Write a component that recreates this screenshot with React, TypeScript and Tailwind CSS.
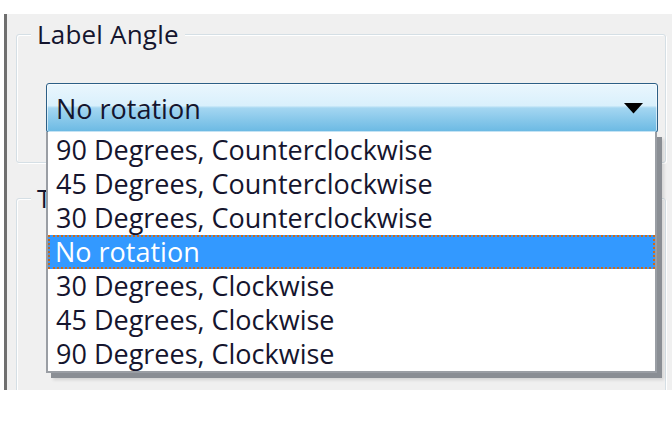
import React from "react";

const items = [
  "90 Degrees, Counterclockwise",
  "45 Degrees, Counterclockwise",
  "30 Degrees, Counterclockwise",
  "No rotation",
  "30 Degrees, Clockwise",
  "45 Degrees, Clockwise",
  "90 Degrees, Clockwise",
];

export default function App() {
  return (
    <div
      className="w-[672px] h-[423px] bg-white overflow-hidden"
      style={{ fontFamily: '"Open Sans", "Noto Sans", sans-serif' }}
    >
      <div className="relative ml-[4px] mt-[14px] h-[376px] overflow-hidden border-l-[3px] border-[#6f6f6f] bg-[#f0f0f0] pl-[9px] pr-[6px] pt-[20px] text-[27px] text-[#15152e]">
        {/* Group box 1 */}
        <div className="relative h-[129px] border border-[#d5dfe5] shadow-[inset_1px_1px_0_#ffffff,1px_1px_0_#ffffff] rounded-[3px]">
          <div className="absolute left-[14px] top-[-21px] bg-[#f0f0f0] px-[6px] leading-[40px] text-[26px] tracking-[0.2px]">
            Label Angle
          </div>
          {/* Combo box */}
          <div className="ml-[29px] mr-[7px] mt-[48px] h-[50px] rounded-[3px] border border-[#2c5f86] bg-[linear-gradient(to_bottom,#eaf6fd_0%,#d9f0fc_45%,#a4d6f1_50%,#6ab9e3_100%)] flex items-center pl-[9px] pr-[14px] shadow-[inset_0_0_0_1px_rgba(255,255,255,0.6)]">
            <span className="flex-1 leading-none">No rotation</span>
            <svg width="19" height="11" viewBox="0 0 19 11">
              <path d="M0 0 H19 L9.5 10.5 Z" fill="#000" />
            </svg>
          </div>
        </div>
        {/* Group box 2 */}
        <div className="relative mt-[35px] h-[260px] border border-[#d5dfe5] shadow-[inset_1px_1px_0_#ffffff,1px_1px_0_#ffffff] rounded-[3px]">
          <div className="absolute left-[14px] top-[-21px] bg-[#f0f0f0] px-[6px] leading-[40px] text-[26px]">
            Text
          </div>
        </div>

        {/* Dropdown list (overlay) */}
        <div className="absolute left-[39px] top-[118px] w-[611px] border-2 border-t-0 border-[#9a9ea4] bg-white shadow-[5px_5px_0_#8a8e94,7px_7px_3px_rgba(0,0,0,0.12)]">
          <div className="h-[1px]" />
          {items.map((it, i) => (
            <div
              key={i}
              className={
                i === 3
                  ? "h-[34px] flex items-center pl-[7px] bg-[#3399ff] text-white outline-2 outline-dotted outline-[#cc6a1a] -outline-offset-2"
                  : "h-[34px] flex items-center pl-[8px]"
              }
            >
              {it}
            </div>
          ))}
        </div>
      </div>
    </div>
  );
}
